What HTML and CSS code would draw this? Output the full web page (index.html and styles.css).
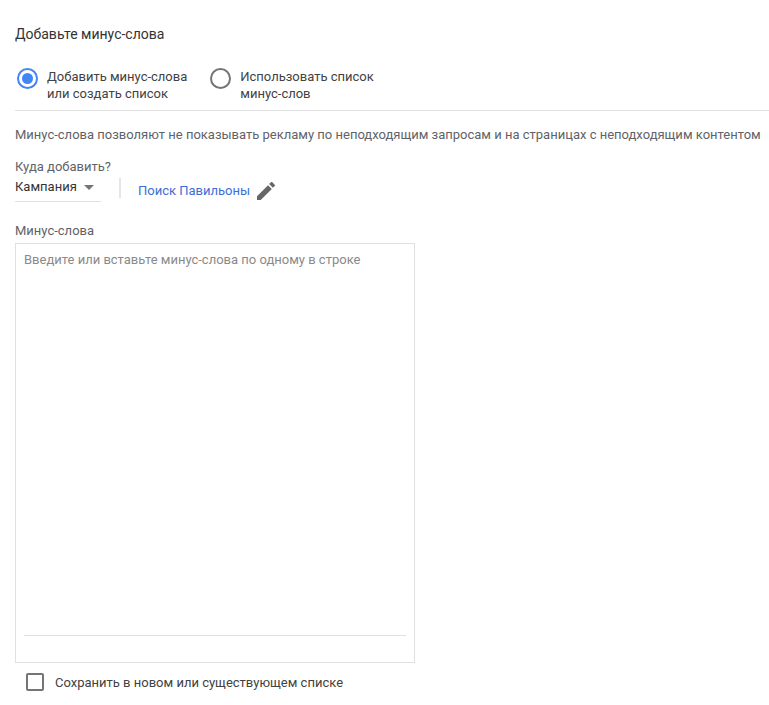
FILE: index.html
```html
<!DOCTYPE html>
<html lang="ru">
<head>
    <meta charset="UTF-8">
    <title>Добавьте минус-слова</title>
    <link rel="stylesheet" href="styles.css">
</head>
<body>
    <div class="page">
        <h1 class="title">Добавьте минус-слова</h1>
        <div class="radio-group">
            <div class="radio-item first">
                <span class="radio checked"><span class="radio-dot"></span></span>
                <span class="radio-label">Добавить минус-слова<br>или создать список</span>
            </div>
            <div class="radio-item">
                <span class="radio"></span>
                <span class="radio-label">Использовать список<br>минус-слов</span>
            </div>
        </div>
        <p class="hint">Минус-слова позволяют не показывать рекламу по неподходящим запросам и на страницах с неподходящим контентом</p>
        <div class="target-label">Куда добавить?</div>
        <div class="target-row">
            <div class="select">
                <span class="select-value">Кампания</span>
                <span class="caret"></span>
            </div>
            <div class="divider"></div>
            <a class="campaign-link">Поиск Павильоны</a>
            <svg class="edit-icon" width="24" height="24" viewBox="0 0 24 24"><path d="M3 17.25V21h3.75L17.81 9.94l-3.75-3.75L3 17.25zM20.71 7.04a1 1 0 0 0 0-1.41l-2.34-2.34a1 1 0 0 0-1.41 0l-1.83 1.83 3.75 3.75 1.83-1.83z"/></svg>
        </div>
        <div class="words-label">Минус-слова</div>
        <div class="words-box">
            <div class="placeholder">Введите или вставьте минус-слова по одному в строке</div>
            <div class="words-line"></div>
        </div>
        <div class="save-row">
            <span class="checkbox"></span>
            <span>Сохранить в новом или существующем списке</span>
        </div>
    </div>
</body>
</html>
```

FILE: styles.css
```css
body {
    margin: 0;
    background-color: #fff;
    font-family: Roboto, "Liberation Sans", sans-serif;
    font-size: 13px;
    color: #424242;
}
.page {
    padding: 25px 0 0 15px;
}
.title {
    margin: 0;
    font-size: 14px;
    font-weight: 400;
    line-height: 18px;
    color: #333;
}
.radio-group {
    display: flex;
    margin-top: 25px;
    padding-bottom: 8px;
    padding-left: 2px;
    border-bottom: 1px solid #e0e0e0;
}
.radio-item {
    display: flex;
    gap: 9px;
}
.radio-item.first {
    margin-right: 23px;
}
.radio-label {
    line-height: 17px;
}
.radio {
    box-sizing: border-box;
    width: 21px;
    height: 21px;
    border: 2px solid #757575;
    border-radius: 50%;
    display: flex;
    align-items: center;
    justify-content: center;
}
.radio.checked {
    border-color: #4285f4;
}
.radio-dot {
    width: 11px;
    height: 11px;
    border-radius: 50%;
    background-color: #4285f4;
}
.hint {
    margin: 16px 0 0;
    line-height: 16px;
    color: #5f6368;
    white-space: nowrap;
}
.target-label {
    margin-top: 16px;
    line-height: 16px;
    color: #5f6368;
}
.target-row {
    display: flex;
    align-items: flex-start;
}
.select {
    display: flex;
    align-items: center;
    width: 86px;
    height: 26px;
    border-bottom: 1px solid #e0e0e0;
    color: #333;
}
.select-value {
    margin-bottom: 4px;
}
.caret {
    margin: 0 0 2px 7px;
    border-left: 5px solid transparent;
    border-right: 5px solid transparent;
    border-top: 5px solid #757575;
}
.divider {
    width: 2px;
    height: 20px;
    margin: 3px 17px 0 18px;
    background-color: #e6e6e6;
}
.campaign-link {
    margin-top: 8px;
    line-height: 16px;
    color: #3b6fd8;
}
.edit-icon {
    margin: 4px 0 0 4px;
    fill: #666;
}
.words-label {
    margin-top: 20px;
    line-height: 16px;
    color: #5f6368;
}
.words-box {
    box-sizing: border-box;
    width: 400px;
    height: 420px;
    margin-top: 4px;
    padding: 8px 8px 26px;
    border: 1px solid #e0e0e0;
    display: flex;
    flex-direction: column;
    justify-content: space-between;
}
.placeholder {
    line-height: 16px;
    color: #8a8a8a;
}
.words-line {
    height: 1px;
    background-color: #e0e0e0;
}
.save-row {
    display: flex;
    align-items: center;
    gap: 11px;
    margin: 10px 0 0 11px;
}
.checkbox {
    box-sizing: border-box;
    width: 18px;
    height: 18px;
    border: 2px solid #757575;
    border-radius: 2px;
}
```
